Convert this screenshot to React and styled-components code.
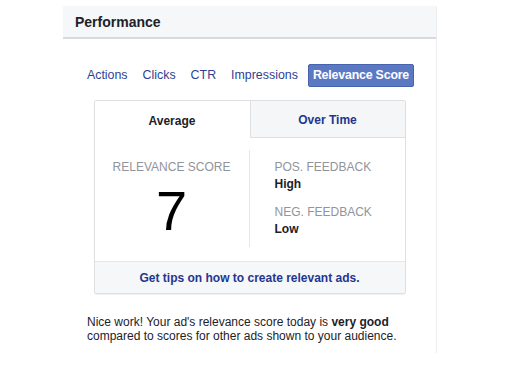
import React from "react";
import styled, { createGlobalStyle } from "styled-components";

const Global = createGlobalStyle`
  html, body { margin: 0; padding: 0; background: #ffffff; }
  body { font-family: "Liberation Sans", Arial, Helvetica, sans-serif; color: #1d2129; }
`;

const Panel = styled.section`
  width: 374px;
  margin: 6px 0 0 63px;
  border-right: 1px solid #eceef1;
  min-height: 347px;
  box-sizing: border-box;
`;

const Header = styled.header`
  height: 31px;
  background: #f6f7f9;
  border-bottom: 2px solid #d8dadf;
  display: flex;
  align-items: center;
  padding-left: 12px;
  font-size: 14px;
  font-weight: bold;
  color: #1d2129;
`;

const Body = styled.div`
  display: flex;
  flex-direction: column;
  align-items: center;
  padding-top: 24px;
`;

const Nav = styled.nav`
  display: flex;
  align-items: center;
  gap: 13px;
  height: 24px;
  margin-left: 1px;
`;

const NavItem = styled.span`
  font-size: 12.4px;
  color: ${(p) => (p.$active ? "#ffffff" : "#2f3f92")};
  background: ${(p) => (p.$active ? "#5b79c3" : "transparent")};
  border: 1px solid ${(p) => (p.$active ? "#4763ad" : "transparent")};
  border-radius: 2px;
  padding: ${(p) => (p.$active ? "3px 4px" : "3px 0")};
  margin-left: ${(p) => (p.$active ? "-4px" : "0")};
  font-weight: ${(p) => (p.$active ? "bold" : "normal")};
  letter-spacing: ${(p) => (p.$active ? "-0.2px" : "0")};
  line-height: 15px;
`;

const Card = styled.div`
  margin-top: 13px;
  width: 312px;
  border: 1px solid #dddfe2;
  border-radius: 2px;
  box-shadow: 0 1px 1px rgba(0, 0, 0, 0.06);
  box-sizing: border-box;
  display: flex;
  flex-direction: column;
`;

const Tabs = styled.div`
  display: grid;
  grid-template-columns: 1fr 1fr;
  height: 37px;
`;

const Tab = styled.div`
  display: flex;
  align-items: center;
  justify-content: center;
  padding-top: 2px;
  box-sizing: border-box;
  font-size: 12px;
  font-weight: bold;
  color: ${(p) => (p.$active ? "#1d2129" : "#23368f")};
  background: ${(p) => (p.$active ? "#ffffff" : "#f5f6f8")};
  border-left: ${(p) => (p.$active ? "none" : "1px solid #dddfe2")};
  border-bottom: ${(p) => (p.$active ? "none" : "1px solid #dddfe2")};
`;

const Stats = styled.div`
  display: grid;
  grid-template-columns: 155px 1fr;
  padding: 12px 0 14px;
  height: 123px;
  box-sizing: border-box;
`;

const ScoreCol = styled.div`
  display: flex;
  flex-direction: column;
  align-items: center;
  border-right: 1px solid #e5e6e9;
  padding-top: 10px;
`;

const Label = styled.div`
  font-size: 12px;
  color: #90949c;
  text-transform: uppercase;
  line-height: 14px;
`;

const Score = styled.div`
  font-size: 56px;
  line-height: 56px;
  color: #000000;
  margin-top: 9px;
`;

const FeedbackCol = styled.div`
  display: flex;
  flex-direction: column;
  padding: 10px 0 0 25px;
`;

const Value = styled.div`
  font-size: 12px;
  font-weight: bold;
  color: #1d2129;
  line-height: 14px;
  margin-top: 3px;
  margin-bottom: ${(p) => (p.$gap ? "14px" : "0")};
`;

const Footer = styled.div`
  height: 31px;
  background: #f6f7f9;
  border-top: 1px solid #e5e6e9;
  display: flex;
  align-items: center;
  justify-content: center;
  font-size: 12px;
  font-weight: bold;
  color: #23368f;
`;

const Note = styled.p`
  align-self: flex-start;
  margin: 21px 0 0 24px;
  width: 320px;
  font-size: 12px;
  line-height: 14px;
  color: #1d2129;
`;

export default function App() {
  const navs = ["Actions", "Clicks", "CTR", "Impressions", "Relevance Score"];
  return (
    <>
      <Global />
      <Panel>
        <Header>Performance</Header>
        <Body>
          <Nav>
            {navs.map((n) => (
              <NavItem key={n} $active={n === "Relevance Score"}>
                {n}
              </NavItem>
            ))}
          </Nav>
          <Card>
            <Tabs>
              <Tab $active>Average</Tab>
              <Tab>Over Time</Tab>
            </Tabs>
            <Stats>
              <ScoreCol>
                <Label>Relevance Score</Label>
                <Score>7</Score>
              </ScoreCol>
              <FeedbackCol>
                <Label>Pos. Feedback</Label>
                <Value $gap>High</Value>
                <Label>Neg. Feedback</Label>
                <Value>Low</Value>
              </FeedbackCol>
            </Stats>
            <Footer>Get tips on how to create relevant ads.</Footer>
          </Card>
          <Note>
            Nice work! Your ad's relevance score today is <b>very good</b>{" "}
            compared to scores for other ads shown to your audience.
          </Note>
        </Body>
      </Panel>
    </>
  );
}
